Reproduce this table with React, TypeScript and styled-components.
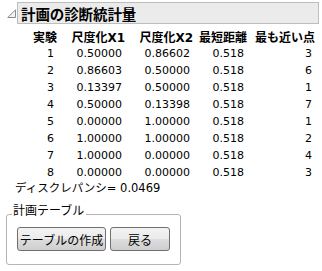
import styled, { createGlobalStyle } from "styled-components";

const GlobalStyle = createGlobalStyle`
  body {
    margin: 0;
    background: #ffffff;
    font-family: "DejaVu Sans", "Noto Sans CJK JP", sans-serif;
    font-size: 11px;
    color: #000000;
  }
`;

const Panel = styled.div`
  width: 322px;
  height: 271px;
  overflow: hidden;
`;

const OutlineHeader = styled.div`
  display: flex;
  align-items: center;
  padding: 2px 3px 0 7px;
`;

const Disclosure = styled.svg`
  width: 9px;
  height: 9px;
  margin-right: 1px;
  flex: none;
`;

const TitleBar = styled.div`
  flex: 1;
  height: 20px;
  display: flex;
  align-items: center;
  padding-left: 3px;
  background: #ebebeb;
  border: 1px solid #bdbdbd;
  font-family: "Noto Sans CJK JP", sans-serif;
  font-weight: 700;
  font-size: 14.5px;
  letter-spacing: -0.1px;
`;

const Table = styled.div`
  display: grid;
  grid-template-columns: 37px 68px 68px 54px 68px;
  grid-auto-rows: 17px;
  margin: 4px 0 0 20px;
  align-items: center;
`;

const HeadCell = styled.div`
  text-align: right;
  font-family: "DejaVu Sans", "Noto Sans CJK JP", sans-serif;
  font-weight: 700;
  font-size: 12px;
  white-space: nowrap;
`;

const Cell = styled.div`
  text-align: right;
  padding-right: 3px;
  white-space: nowrap;
`;

const Discrepancy = styled.div`
  margin: 0 0 0 15px;
  height: 14px;
  line-height: 14px;
  font-size: 11.5px;
`;

const Group = styled.fieldset`
  width: 175px;
  box-sizing: border-box;
  margin: 9px 0 0 6px;
  padding: 3px 10px 13px 10px;
  border: 1px solid #b4b4b4;
  border-radius: 3px;
`;

const GroupLegend = styled.legend`
  margin-left: -5px;
  padding: 0 2px 6px 1px;
  line-height: 14px;
  font-size: 12px;
`;

const Buttons = styled.div`
  display: flex;
  gap: 4px;
`;

const Button = styled.button<{ $w: number }>`
  width: ${({ $w }) => $w}px;
  height: 24px;
  padding: 0;
  border: 1px solid #707070;
  border-radius: 3px;
  background: linear-gradient(#f2f2f2 0%, #ebebeb 50%, #dddddd 51%, #cfcfcf 100%);
  font-family: "Noto Sans CJK JP", sans-serif;
  font-size: 12px;
  color: #000;
  white-space: nowrap;
`;

const headers = ["実験", "尺度化X1", "尺度化X2", "最短距離", "最も近い点"];

const rows: [number, string, string, string, number][] = [
  [1, "0.50000", "0.86602", "0.518", 3],
  [2, "0.86603", "0.50000", "0.518", 6],
  [3, "0.13397", "0.50000", "0.518", 1],
  [4, "0.50000", "0.13398", "0.518", 7],
  [5, "0.00000", "1.00000", "0.518", 1],
  [6, "1.00000", "1.00000", "0.518", 2],
  [7, "1.00000", "0.00000", "0.518", 4],
  [8, "0.00000", "0.00000", "0.518", 3],
];

export default function App() {
  return (
    <Panel>
      <GlobalStyle />
      <OutlineHeader>
        <Disclosure viewBox="0 0 9 9">
          <path d="M8.5 0.8 L8.5 8.5 L0.8 8.5 Z" fill="#f4f4f4" stroke="#8a8a8a" strokeWidth="1" />
        </Disclosure>
        <TitleBar>計画の診断統計量</TitleBar>
      </OutlineHeader>
      <Table>
        {headers.map((h) => (
          <HeadCell key={h}>{h}</HeadCell>
        ))}
        {rows.map((r) =>
          r.map((v, i) => <Cell key={`${r[0]}-${i}`}>{v}</Cell>)
        )}
      </Table>
      <Discrepancy>ディスクレパンシ= 0.0469</Discrepancy>
      <Group>
        <GroupLegend>計画テーブル</GroupLegend>
        <Buttons>
          <Button $w={89}>テーブルの作成</Button>
          <Button $w={60}>戻る</Button>
        </Buttons>
      </Group>
    </Panel>
  );
}
